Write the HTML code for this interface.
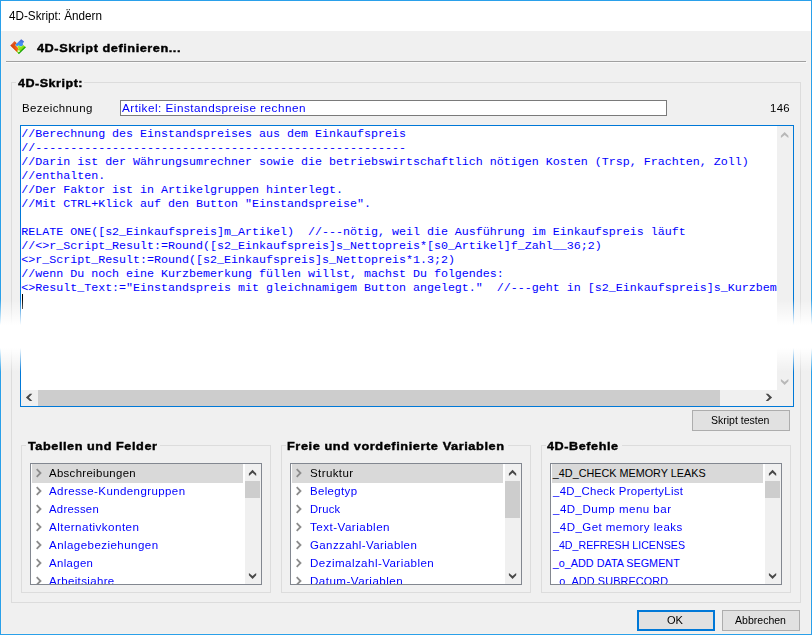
<!DOCTYPE html>
<html lang="de">
<head>
<meta charset="utf-8">
<title>4D-Skript: Ändern</title>
<style>
*{box-sizing:border-box;margin:0;padding:0}
html,body{width:812px;height:635px;overflow:hidden;background:#f0f0f0}
body{position:relative;font-family:"Liberation Sans",sans-serif;font-size:11.5px;color:#000}
.a{position:absolute}
.t{position:absolute;white-space:nowrap;line-height:14px;height:14px;transform-origin:0 50%}
.gb{position:absolute;border:1px solid #dcdcdc}
.gap{position:absolute;height:3px;background:#f0f0f0}
.list{position:absolute;top:463px;width:232px;height:122px;background:#fff;border:1px solid #828790;overflow:hidden}
.sel{position:absolute;left:1px;top:0;width:211px;height:19px;background:#d9d9d9}
.sb{position:absolute;left:214px;top:0;width:16px;height:120px;background:#f0f0f0}
.th{position:absolute;left:0;width:15px;background:#cdcdcd}
.btn{position:absolute;background:#e1e1e1;border:1px solid #adadad}
#code{position:absolute;left:20px;top:125px;width:774px;height:282px;background:#fff;border:1px solid #0078d7;overflow:hidden}
#code pre{position:absolute;left:0.2px;top:1px;font-family:"Liberation Mono",monospace;font-size:11.667px;line-height:14px;color:#0000ff;white-space:pre}
#fade{position:absolute;left:0;top:299px;width:812px;height:73px;background:linear-gradient(to bottom,rgba(255,255,255,0) 0,rgba(255,255,255,1) 35.6%,rgba(255,255,255,1) 67.1%,rgba(255,255,255,0) 100%);pointer-events:none}
</style>
</head>
<body>

<div class="a" style="left:0;top:0;width:812px;height:31px;background:#fff"></div>
<svg class="a" style="left:6px;top:34px" width="24" height="24" viewBox="0 0 24 24">
<defs>
<linearGradient id="gr" x1="0" y1="0" x2="0.6" y2="1"><stop offset="0" stop-color="#e08a6c"/><stop offset="0.45" stop-color="#e04a10"/><stop offset="1" stop-color="#ff7a10"/></linearGradient>
<linearGradient id="gb" x1="0.6" y1="0" x2="0.3" y2="1"><stop offset="0" stop-color="#3f63d0"/><stop offset="0.5" stop-color="#4a8cf0"/><stop offset="1" stop-color="#22a0ff"/></linearGradient>
<linearGradient id="gg" x1="0.2" y1="0" x2="0.9" y2="0.8"><stop offset="0" stop-color="#b6f52a"/><stop offset="0.55" stop-color="#7be010"/><stop offset="1" stop-color="#0c9a10"/></linearGradient>
<filter id="bl" x="-10%" y="-10%" width="120%" height="120%"><feGaussianBlur stdDeviation="0.35"/></filter>
</defs>
<g filter="url(#bl)">
<polygon points="4.4,11.4 8.5,6.9 10.8,9.2 9.2,11 12.6,14.4 11,17.9" fill="url(#gr)"/>
<polygon points="9.3,10.7 15.2,5.2 18.1,7.6 16.7,9.8 17.3,11.3 15.1,12.6 12.5,11.4 11,12.3" fill="url(#gb)"/>
<polygon points="11.2,12.2 12.6,11.6 15,12.8 17.4,10.9 19.8,13.3 12.9,19.9 10.8,17.9 12.6,14.5" fill="url(#gg)"/>
<polygon points="19.9,13.3 12.9,20 12.1,19.2 18.9,12.4" fill="#109c12" opacity="0.85"/>
<polygon points="4.4,11.4 11,17.9 11.6,16.9 5.2,10.6" fill="#d23c04" opacity="0.7"/>
<ellipse cx="12.8" cy="17.1" rx="1.1" ry="0.9" fill="#fff" opacity="0.9"/>
</g>
</svg>
<div class="a" style="left:6px;top:61px;width:800px;height:1px;background:#a0a0a0"></div>
<div class="a" style="left:6px;top:62px;width:801px;height:1px;background:#fafafa"></div>
<div class="gb" style="left:11px;top:82px;width:790px;height:521px"></div>
<div class="gap" style="left:16px;top:81px;width:68px"></div>
<div class="a" style="left:120px;top:100px;width:547px;height:16px;background:#fff;border:1px solid #7a7a7a"></div>
<div id="code"><pre>//Berechnung des Einstandspreises aus dem Einkaufspreis
//-----------------------------------------------------
//Darin ist der Währungsumrechner sowie die betriebswirtschaftlich nötigen Kosten (Trsp, Frachten, Zoll)
//enthalten.
//Der Faktor ist in Artikelgruppen hinterlegt.
//Mit CTRL+Klick auf den Button "Einstandspreise".

RELATE ONE([s2_Einkaufspreis]m_Artikel)  //---nötig, weil die Ausführung im Einkaufspreis läuft
//&lt;&gt;r_Script_Result:=Round([s2_Einkaufspreis]s_Nettopreis*[s0_Artikel]f_Zahl__36;2)
&lt;&gt;r_Script_Result:=Round([s2_Einkaufspreis]s_Nettopreis*1.3;2)
//wenn Du noch eine Kurzbemerkung füllen willst, machst Du folgendes:
&lt;&gt;Result_Text:="Einstandspreis mit gleichnamigem Button angelegt."  //---geht in [s2_Einkaufspreis]s_Kurzbem</pre>
<div class="a" style="left:1px;top:168px;width:1px;height:15px;background:#000"></div>
<div class="a" style="left:756px;top:0;width:17px;height:264px;background:#f0f0f0"></div>
<svg class="a" style="left:756px;top:0" width="17" height="17" viewBox="0 0 17 17"><polygon points="3.9,9.7 7.65,6 11.4,9.7 11.4,12 7.65,8.9 3.9,12" fill="#b8b8b8"/></svg>
<svg class="a" style="left:756px;top:247px" width="17" height="17" viewBox="0 0 17 17"><polygon points="3.9,8.2 7.65,11.9 11.4,8.2 11.4,6 7.65,9.1 3.9,6" fill="#b8b8b8"/></svg>
<div class="a" style="left:0;top:264px;width:773px;height:16px;background:#f0f0f0"></div>
<div class="a" style="left:17px;top:264px;width:682px;height:16px;background:#cdcdcd"></div>
<svg class="a" style="left:0;top:264px" width="17" height="16" viewBox="0 0 17 16"><polygon points="4.9,7.4 8.9,3.85 11.3,3.85 7.9,7.4 11.3,10.95 8.9,10.95" fill="#484848"/></svg>
<svg class="a" style="left:739px;top:264px" width="17" height="16" viewBox="0 0 17 16"><polygon points="12.1,7.4 8.1,3.85 5.7,3.85 9.1,7.4 5.7,10.95 8.1,10.95" fill="#484848"/></svg>
</div>
<div class="btn" style="left:692px;top:410px;width:98px;height:21px"></div>
<div class="gb" style="left:21px;top:445px;width:250px;height:148px"></div>
<div class="gap" style="left:26px;top:444px;width:134px"></div>
<div class="gb" style="left:281px;top:445px;width:250px;height:148px"></div>
<div class="gap" style="left:286px;top:444px;width:222px"></div>
<div class="gb" style="left:541px;top:445px;width:250px;height:148px"></div>
<div class="gap" style="left:546px;top:444px;width:76px"></div>
<div class="list" style="left:30px">
<div class="sel"></div>
<div class="t" style="left:18.30px;top:2.26px;font-size:10.8px;letter-spacing:0.320px;transform:scaleX(1.0542);">Abschreibungen</div>
<svg class="a" style="left:4px;top:3.3px" width="9" height="12" viewBox="0 0 9 12"><path d="M1.7 2.2 L5.5 6 L1.7 9.8" fill="none" stroke="#8c8c8c" stroke-width="1.8"/></svg>
<div class="t" style="left:18.30px;top:20.26px;font-size:10.8px;color:#0000ff;letter-spacing:0.391px;transform:scaleX(1.0641);">Adresse-Kundengruppen</div>
<svg class="a" style="left:4px;top:21.3px" width="9" height="12" viewBox="0 0 9 12"><path d="M1.7 2.2 L5.5 6 L1.7 9.8" fill="none" stroke="#8c8c8c" stroke-width="1.8"/></svg>
<div class="t" style="left:18.30px;top:38.26px;font-size:10.8px;color:#0000ff;letter-spacing:0.273px;transform:scaleX(1.0458);">Adressen</div>
<svg class="a" style="left:4px;top:39.3px" width="9" height="12" viewBox="0 0 9 12"><path d="M1.7 2.2 L5.5 6 L1.7 9.8" fill="none" stroke="#8c8c8c" stroke-width="1.8"/></svg>
<div class="t" style="left:18.30px;top:56.26px;font-size:10.8px;color:#0000ff;letter-spacing:0.405px;transform:scaleX(1.0772);">Alternativkonten</div>
<svg class="a" style="left:4px;top:57.3px" width="9" height="12" viewBox="0 0 9 12"><path d="M1.7 2.2 L5.5 6 L1.7 9.8" fill="none" stroke="#8c8c8c" stroke-width="1.8"/></svg>
<div class="t" style="left:18.30px;top:74.26px;font-size:10.8px;color:#0000ff;letter-spacing:0.413px;transform:scaleX(1.0685);">Anlagebeziehungen</div>
<svg class="a" style="left:4px;top:75.3px" width="9" height="12" viewBox="0 0 9 12"><path d="M1.7 2.2 L5.5 6 L1.7 9.8" fill="none" stroke="#8c8c8c" stroke-width="1.8"/></svg>
<div class="t" style="left:18.30px;top:92.26px;font-size:10.8px;color:#0000ff;letter-spacing:0.334px;transform:scaleX(1.0557);">Anlagen</div>
<svg class="a" style="left:4px;top:93.3px" width="9" height="12" viewBox="0 0 9 12"><path d="M1.7 2.2 L5.5 6 L1.7 9.8" fill="none" stroke="#8c8c8c" stroke-width="1.8"/></svg>
<div class="t" style="left:18.30px;top:110.26px;font-size:10.8px;color:#0000ff;letter-spacing:0.332px;transform:scaleX(1.0647);">Arbeitsjahre</div>
<svg class="a" style="left:4px;top:111.3px" width="9" height="12" viewBox="0 0 9 12"><path d="M1.7 2.2 L5.5 6 L1.7 9.8" fill="none" stroke="#8c8c8c" stroke-width="1.8"/></svg>
<div class="sb">
<div class="th" style="top:17px;height:17px"></div>
<svg class="a" style="left:0;top:0" width="16" height="17" viewBox="0 0 16 17"><polygon points="3.9,9.6 7.55,5.8 11.2,9.6 11.2,12 7.55,8.8 3.9,12" fill="#484848"/></svg>
<svg class="a" style="left:0;top:103px" width="16" height="17" viewBox="0 0 16 17"><polygon points="3.9,8.3 7.55,12 11.2,8.3 11.2,5.9 7.55,9.1 3.9,5.9" fill="#484848"/></svg>
</div></div>
<div class="list" style="left:290px">
<div class="sel"></div>
<div class="t" style="left:18.50px;top:2.26px;font-size:10.8px;letter-spacing:0.355px;transform:scaleX(1.0699);">Struktur</div>
<svg class="a" style="left:4px;top:3.3px" width="9" height="12" viewBox="0 0 9 12"><path d="M1.7 2.2 L5.5 6 L1.7 9.8" fill="none" stroke="#8c8c8c" stroke-width="1.8"/></svg>
<div class="t" style="left:18.50px;top:20.26px;font-size:10.8px;color:#0000ff;letter-spacing:0.336px;transform:scaleX(1.0600);">Belegtyp</div>
<svg class="a" style="left:4px;top:21.3px" width="9" height="12" viewBox="0 0 9 12"><path d="M1.7 2.2 L5.5 6 L1.7 9.8" fill="none" stroke="#8c8c8c" stroke-width="1.8"/></svg>
<div class="t" style="left:18.50px;top:38.26px;font-size:10.8px;color:#0000ff;letter-spacing:0.220px;transform:scaleX(1.0375);">Druck</div>
<svg class="a" style="left:4px;top:39.3px" width="9" height="12" viewBox="0 0 9 12"><path d="M1.7 2.2 L5.5 6 L1.7 9.8" fill="none" stroke="#8c8c8c" stroke-width="1.8"/></svg>
<div class="t" style="left:18.50px;top:56.26px;font-size:10.8px;color:#0000ff;letter-spacing:0.421px;transform:scaleX(1.0795);">Text-Variablen</div>
<svg class="a" style="left:4px;top:57.3px" width="9" height="12" viewBox="0 0 9 12"><path d="M1.7 2.2 L5.5 6 L1.7 9.8" fill="none" stroke="#8c8c8c" stroke-width="1.8"/></svg>
<div class="t" style="left:18.50px;top:74.26px;font-size:10.8px;color:#0000ff;letter-spacing:0.366px;transform:scaleX(1.0654);">Ganzzahl-Variablen</div>
<svg class="a" style="left:4px;top:75.3px" width="9" height="12" viewBox="0 0 9 12"><path d="M1.7 2.2 L5.5 6 L1.7 9.8" fill="none" stroke="#8c8c8c" stroke-width="1.8"/></svg>
<div class="t" style="left:18.50px;top:92.26px;font-size:10.8px;color:#0000ff;letter-spacing:0.404px;transform:scaleX(1.0734);">Dezimalzahl-Variablen</div>
<svg class="a" style="left:4px;top:93.3px" width="9" height="12" viewBox="0 0 9 12"><path d="M1.7 2.2 L5.5 6 L1.7 9.8" fill="none" stroke="#8c8c8c" stroke-width="1.8"/></svg>
<div class="t" style="left:18.50px;top:110.26px;font-size:10.8px;color:#0000ff;letter-spacing:0.429px;transform:scaleX(1.0743);">Datum-Variablen</div>
<svg class="a" style="left:4px;top:111.3px" width="9" height="12" viewBox="0 0 9 12"><path d="M1.7 2.2 L5.5 6 L1.7 9.8" fill="none" stroke="#8c8c8c" stroke-width="1.8"/></svg>
<div class="sb">
<div class="th" style="top:17px;height:36.5px"></div>
<svg class="a" style="left:0;top:0" width="16" height="17" viewBox="0 0 16 17"><polygon points="3.9,9.6 7.55,5.8 11.2,9.6 11.2,12 7.55,8.8 3.9,12" fill="#484848"/></svg>
<svg class="a" style="left:0;top:103px" width="16" height="17" viewBox="0 0 16 17"><polygon points="3.9,8.3 7.55,12 11.2,8.3 11.2,5.9 7.55,9.1 3.9,5.9" fill="#484848"/></svg>
</div></div>
<div class="list" style="left:550px">
<div class="sel"></div>
<div class="t" style="left:1.80px;top:2.26px;font-size:10.8px;letter-spacing:0.009px;">_4D_CHECK MEMORY LEAKS</div>
<div class="t" style="left:1.80px;top:20.26px;font-size:10.8px;color:#0000ff;letter-spacing:0.302px;transform:scaleX(1.0536);">_4D_Check PropertyList</div>
<div class="t" style="left:1.80px;top:38.26px;font-size:10.8px;color:#0000ff;letter-spacing:0.449px;transform:scaleX(1.0688);">_4D_Dump menu bar</div>
<div class="t" style="left:1.80px;top:56.26px;font-size:10.8px;color:#0000ff;letter-spacing:0.407px;transform:scaleX(1.0670);">_4D_Get memory leaks</div>
<div class="t" style="left:1.80px;top:74.26px;font-size:10.8px;color:#0000ff;letter-spacing:-0.045px;transform:scaleX(0.9932);">_4D_REFRESH LICENSES</div>
<div class="t" style="left:1.80px;top:92.26px;font-size:10.8px;color:#0000ff;letter-spacing:0.008px;">_o_ADD DATA SEGMENT</div>
<div class="t" style="left:1.80px;top:110.26px;font-size:10.8px;color:#0000ff;letter-spacing:0.078px;transform:scaleX(1.0109);">_o_ADD SUBRECORD</div>
<div class="sb">
<div class="th" style="top:17px;height:17px"></div>
<svg class="a" style="left:0;top:0" width="16" height="17" viewBox="0 0 16 17"><polygon points="3.9,9.6 7.55,5.8 11.2,9.6 11.2,12 7.55,8.8 3.9,12" fill="#484848"/></svg>
<svg class="a" style="left:0;top:103px" width="16" height="17" viewBox="0 0 16 17"><polygon points="3.9,8.3 7.55,12 11.2,8.3 11.2,5.9 7.55,9.1 3.9,5.9" fill="#484848"/></svg>
</div></div>
<div class="btn" style="left:637px;top:610px;width:78px;height:21px;border:2px solid #0078d7"></div>
<div class="btn" style="left:722px;top:610px;width:78px;height:21px"></div>
<div class="t" style="left:9.00px;top:8.84px;font-size:12px;transform:scaleX(0.9751);">4D-Skript: Ändern</div>
<div class="t" style="left:36.50px;top:41.19px;font-size:11px;font-weight:bold;-webkit-text-stroke:0.4px #000;letter-spacing:0.461px;transform:scaleX(1.1584);">4D-Skript definieren...</div>
<div class="t" style="left:17.50px;top:76.19px;font-size:11px;font-weight:bold;-webkit-text-stroke:0.4px #000;letter-spacing:0.435px;transform:scaleX(1.1420);">4D-Skript:</div>
<div class="t" style="left:21.70px;top:101.26px;font-size:10.8px;letter-spacing:0.376px;transform:scaleX(1.0621);">Bezeichnung</div>
<div class="t" style="left:121.80px;top:101.26px;font-size:10.8px;color:#0000ff;letter-spacing:0.456px;transform:scaleX(1.0860);">Artikel: Einstandspreise rechnen</div>
<div class="t" style="left:769.70px;top:101.26px;font-size:10.8px;letter-spacing:0.331px;transform:scaleX(1.0522);">146</div>
<div class="t" style="left:27.80px;top:439.19px;font-size:11px;font-weight:bold;-webkit-text-stroke:0.4px #000;letter-spacing:0.486px;transform:scaleX(1.1528);">Tabellen und Felder</div>
<div class="t" style="left:287.20px;top:439.19px;font-size:11px;font-weight:bold;-webkit-text-stroke:0.4px #000;letter-spacing:0.492px;transform:scaleX(1.1610);">Freie und vordefinierte Variablen</div>
<div class="t" style="left:547.20px;top:439.19px;font-size:11px;font-weight:bold;-webkit-text-stroke:0.4px #000;letter-spacing:0.495px;transform:scaleX(1.1472);">4D-Befehle</div>
<div class="t" style="left:711.00px;top:412.95px;font-size:11.7px;transform:scaleX(0.8989);">Skript testen</div>
<div class="t" style="left:667.30px;top:612.95px;font-size:11.7px;transform:scaleX(0.9473);">OK</div>
<div class="t" style="left:735.20px;top:612.95px;font-size:11.7px;transform:scaleX(0.9019);">Abbrechen</div>
<div class="a" style="left:1px;top:31px;width:1px;height:603px;background:#f7f2ec"></div>
<div class="a" style="left:1px;top:633px;width:810px;height:1px;background:#f7f2ec"></div>
<div class="a" style="left:810px;top:31px;width:1px;height:603px;background:#f7f2ec"></div>
<div class="a" style="left:0;top:0;width:812px;height:1px;background:#2aa0ea"></div>
<div class="a" style="left:0;top:0;width:1px;height:635px;background:#2aa0ea"></div>
<div class="a" style="left:811px;top:0;width:1px;height:635px;background:#2aa0ea"></div>
<div class="a" style="left:0;top:634px;width:812px;height:1px;background:#2aa0ea"></div>
<div id="fade"></div>
</body>
</html>
